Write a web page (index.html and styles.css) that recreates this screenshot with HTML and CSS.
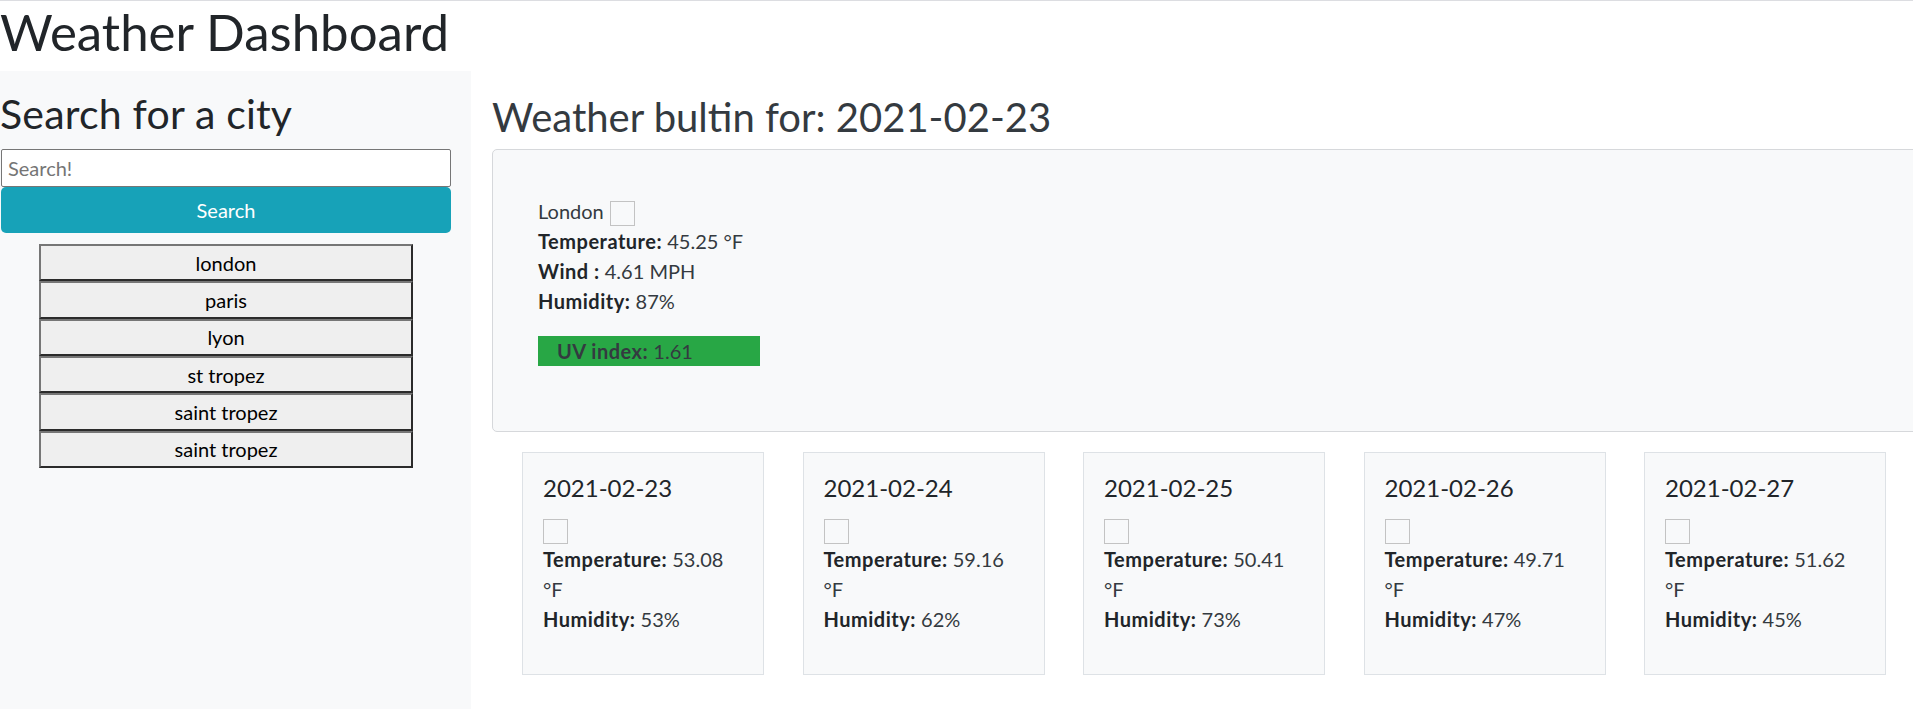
FILE: index.html
```html
<!DOCTYPE html>
<html lang="en">
<head>
<meta charset="utf-8">
<title>Weather Dashboard</title>
<link rel="stylesheet" href="styles.css">
</head>
<body>
<header class="topbar">
  <h1 class="title">Weather Dashboard</h1>
</header>
<div class="layout">
  <aside class="sidebar">
    <h2 class="side-title">Search for a city</h2>
    <form class="search">
      <input class="search-input" type="text" placeholder="Search!">
      <button class="search-btn" type="button">Search</button>
    </form>
    <div class="history">
      <button class="city" type="button">london</button>
      <button class="city" type="button">paris</button>
      <button class="city" type="button">lyon</button>
      <button class="city" type="button">st tropez</button>
      <button class="city" type="button">saint tropez</button>
      <button class="city" type="button">saint tropez</button>
    </div>
  </aside>
  <main class="main">
    <h2 class="bulletin">Weather bultin for: 2021-02-23</h2>
    <section class="current">
      <div class="city-row"><span>London</span><span class="icon"></span></div>
      <p class="line"><strong>Temperature:</strong> 45.25 °F</p>
      <p class="line"><strong>Wind :</strong> 4.61 MPH</p>
      <p class="line"><strong>Humidity:</strong> 87%</p>
      <div class="uv"><strong>UV index:</strong> 1.61</div>
    </section>
    <div class="forecast">
      <div class="fcard">
        <h5 class="fdate">2021-02-23</h5>
        <span class="icon"></span>
        <p><strong>Temperature:</strong> 53.08 <span class="unit">°F</span></p>
        <p><strong>Humidity:</strong> 53%</p>
      </div>
      <div class="fcard">
        <h5 class="fdate">2021-02-24</h5>
        <span class="icon"></span>
        <p><strong>Temperature:</strong> 59.16 <span class="unit">°F</span></p>
        <p><strong>Humidity:</strong> 62%</p>
      </div>
      <div class="fcard">
        <h5 class="fdate">2021-02-25</h5>
        <span class="icon"></span>
        <p><strong>Temperature:</strong> 50.41 <span class="unit">°F</span></p>
        <p><strong>Humidity:</strong> 73%</p>
      </div>
      <div class="fcard">
        <h5 class="fdate">2021-02-26</h5>
        <span class="icon"></span>
        <p><strong>Temperature:</strong> 49.71 <span class="unit">°F</span></p>
        <p><strong>Humidity:</strong> 47%</p>
      </div>
      <div class="fcard">
        <h5 class="fdate">2021-02-27</h5>
        <span class="icon"></span>
        <p><strong>Temperature:</strong> 51.62 <span class="unit">°F</span></p>
        <p><strong>Humidity:</strong> 45%</p>
      </div>
    </div>
  </main>
</div>
</body>
</html>
```

FILE: styles.css
```css
* { box-sizing: border-box; }

html, body {
  margin: 0;
  padding: 0;
  overflow-x: hidden;
}

body {
  font-family: Lato, "Open Sans", sans-serif;
  font-size: 20px;
  line-height: 30px;
  color: #212529;
  background: #fff;
}

.topbar {
  border-top: 1px solid #dcdde1;
}

.title {
  margin: 0 0 8px;
  font-size: 51px;
  line-height: 62px;
  font-weight: 400;
}

.layout {
  display: flex;
  align-items: stretch;
  width: 2000px;
}

.sidebar {
  flex: none;
  width: 471px;
  background: #f8f9fa;
  padding-top: 18px;
}

.side-title {
  margin: 0 0 11px;
  font-size: 41px;
  line-height: 49px;
  font-weight: 400;
  letter-spacing: 0.2px;
}

.search {
  display: flex;
  flex-direction: column;
  width: 450px;
  margin: 0 0 0 1px;
}

.search-input {
  height: 38px;
  border: 1px solid #767676;
  border-radius: 2px;
  padding: 0 6px;
  font: inherit;
  color: #212529;
  background: #fff;
}

.search-input::placeholder { color: #757575; }

.search-btn {
  height: 46px;
  border: 0;
  border-radius: 5px;
  background: #17a2b8;
  color: #fff;
  font: inherit;
}

.history {
  display: flex;
  flex-direction: column;
  width: 374px;
  margin: 11px 0 0 39px;
}

.city {
  height: 37.33px;
  padding: 0;
  background: #efefef;
  border: 2px solid;
  border-color: #767676 #2b2b2b #2b2b2b #767676;
  font: inherit;
  line-height: 1;
  color: #000;
}

.main {
  flex: none;
  width: 1500px;
  padding: 22px 0 40px 21px;
}

.bulletin {
  margin: 0 0 8px;
  font-size: 40px;
  line-height: 48px;
  font-weight: 400;
  color: #343a40;
}

.current {
  background: #f8f9fa;
  border: 1px solid #d6d8db;
  border-radius: 5px;
  padding: 45px 45px 65px;
  color: #343a40;
}

.city-row {
  display: flex;
  align-items: flex-end;
  gap: 6px;
  height: 31px;
}

.icon {
  display: block;
  width: 25px;
  height: 25px;
  border: 1px solid #c3c3c3;
}

.line { margin: 0; }

strong {
  color: #212529;
  font-weight: 700;
  letter-spacing: 0.5px;
}

.uv {
  width: 222px;
  margin-top: 20px;
  padding-left: 19px;
  background: #28a745;
  color: #343a40;
}

.uv strong { color: #343a40; }

.forecast {
  display: flex;
  gap: 38.5px;
  margin: 20px 0 0 30px;
}

.fcard {
  flex: none;
  width: 242px;
  background: #f8f9fa;
  border: 1px solid #dee2e6;
  padding: 20px;
  color: #343a40;
}

.fdate {
  margin: 0 0 16px;
  font-size: 24px;
  line-height: 30px;
  font-weight: 400;
  color: #212529;
}

.fcard p { margin: 0; }
.fcard p:last-child { margin-bottom: 20px; }

.unit { display: block; }
```
